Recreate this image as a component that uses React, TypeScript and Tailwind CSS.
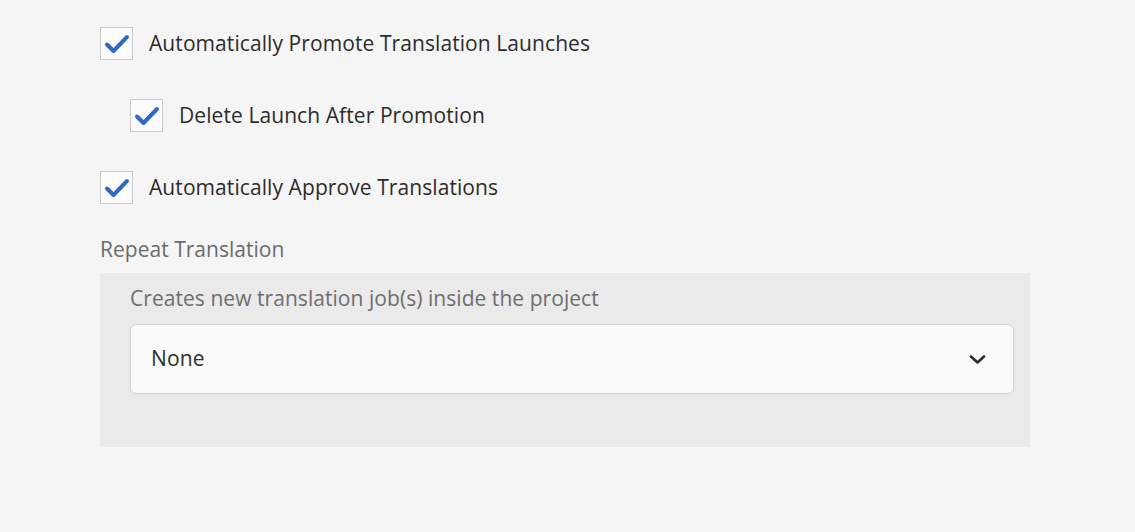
import React from "react";

function Check() {
  return (
    <div className="w-[33px] h-[33px] border border-[#cacaca] bg-[#fbfbfb] flex items-center justify-center shrink-0">
      <svg width="26" height="20" viewBox="0 0 26 20">
        <path d="M3 10.5 L9.5 17 L23 3" fill="none" stroke="#2d6bc4" strokeWidth="4" strokeLinecap="round" strokeLinejoin="round" />
      </svg>
    </div>
  );
}

function Row({ label, indent }: { label: string; indent?: boolean }) {
  return (
    <div className={"flex items-center gap-4 h-[33px] " + (indent ? "ml-[30px]" : "")}>
      <Check />
      <span className="text-[21px] tracking-[0.08px] text-[#2c2c2c]">{label}</span>
    </div>
  );
}

export default function App() {
  return (
    <div
      className="w-[1135px] h-[532px] bg-[#f5f5f5] pl-[100px] pt-[27px]"
      style={{ fontFamily: '"Open Sans", "Noto Sans", sans-serif' }}
    >
      <div className="flex flex-col gap-[39px]">
        <Row label="Automatically Promote Translation Launches" />
        <Row label="Delete Launch After Promotion" indent />
        <Row label="Automatically Approve Translations" />
      </div>
      <div className="mt-[32px] text-[21px] tracking-[0.02px] text-[#6b6b6b] leading-[26px]">Repeat Translation</div>
      <div className="mt-[11px] w-[930px] bg-[#eaeaea] pl-[30px] pr-[16px] pt-[12px] pb-[53px]">
        <div className="text-[21px] tracking-[0.05px] text-[#6e6e6e] leading-[26px]">Creates new translation job(s) inside the project</div>
        <div className="mt-[13px] h-[70px] rounded-[6px] border border-[#d3d3d3] bg-[#fafafa] flex items-center justify-between pl-[20px] pr-[27px]">
          <span className="text-[21px] tracking-[0.15px] text-[#2c2c2c]">None</span>
          <svg width="17" height="11" viewBox="0 0 17 11">
            <path d="M2 2.5 L8.5 8.5 L15 2.5" fill="none" stroke="#2c2c2c" strokeWidth="2.6" strokeLinecap="round" strokeLinejoin="round" />
          </svg>
        </div>
      </div>
    </div>
  );
}
